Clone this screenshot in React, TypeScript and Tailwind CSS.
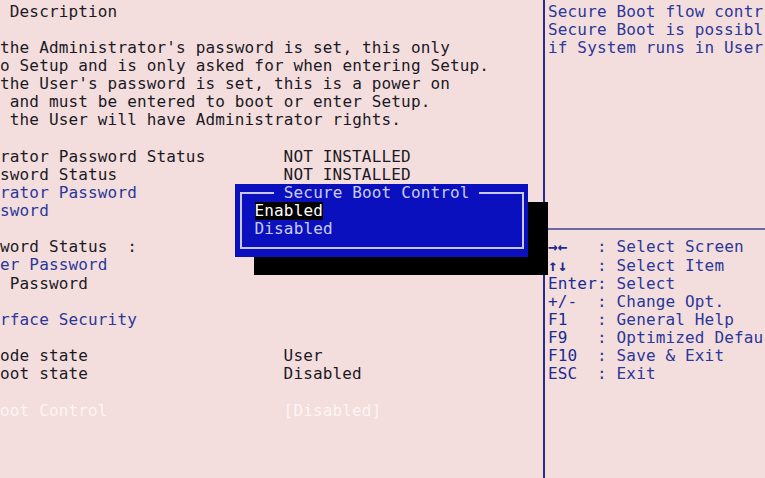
const ROW = "h-[18.15px] leading-[18.15px] whitespace-pre";

const dark = "text-[#1b1926]";
const blue = "text-[#2b3799]";

type Line = { a?: string; b?: string; tone?: "dark" | "blue" | "faint" };

const LEFT: Line[] = [
    { a: " Description" },
    {},
    { a: "the Administrator's password is set, this only" },
    { a: "o Setup and is only asked for when entering Setup." },
    { a: "the User's password is set, this is a power on" },
    { a: " and must be entered to boot or enter Setup." },
    { a: " the User will have Administrator rights." },
    {},
    { a: "rator Password Status", b: "NOT INSTALLED" },
    { a: "sword Status", b: "NOT INSTALLED" },
    { a: "rator Password", tone: "blue" },
    { a: "sword", tone: "blue" },
    {},
    { a: "word Status  :" },
    { a: "er Password", tone: "blue" },
    { a: " Password" },
    {},
    { a: "rface Security", tone: "blue" },
    {},
    { a: "ode state", b: "User" },
    { a: "oot state", b: "Disabled" },
    {},
    { a: "oot Control", b: "[Disabled]", tone: "faint" },
];

const HELP = [
    "Secure Boot flow contr",
    "Secure Boot is possibl",
    "if System runs in User",
];

// [key, description, arrow glyph?]
const KEYS: [string, string, boolean][] = [
    ["→←", "Select Screen", true],
    ["↑↓", "Select Item", true],
    ["Enter", "Select", false],
    ["+/-", "Change Opt.", false],
    ["F1", "General Help", false],
    ["F9", "Optimized Defau", false],
    ["F10", "Save & Exit", false],
    ["ESC", "Exit", false],
];

function toneClass(t?: Line["tone"]) {
    if (t === "blue") return blue;
    if (t === "faint") return "text-[#fdf4f3]";
    return dark;
}

export default function App() {
    return (
        <div
            className="relative w-[765px] h-[478px] overflow-hidden bg-[#f3dedd] text-[16px] tracking-[0.15px]"
            style={{ fontFamily: '"DejaVu Sans Mono", "Liberation Mono", monospace' }}
        >
            <div className="flex h-full">
                {/* left: settings */}
                <div className="w-[543px] shrink-0 pt-[2.5px]">
                    {LEFT.map((l, i) => (
                        <div key={i} className={`${ROW} flex ${toneClass(l.tone)}`}>
                            {l.b ? (
                                <>
                                    <span className="w-[283.6px] shrink-0">{l.a}</span>
                                    <span>{l.b}</span>
                                </>
                            ) : (
                                <span>{l.a ?? ""}</span>
                            )}
                        </div>
                    ))}
                </div>

                <div className="w-[2px] shrink-0 bg-[#2a2a8e]" />

                {/* right: help */}
                <div className="flex-1 pt-[2.5px] overflow-hidden">
                    <div className="h-[217.8px] pl-[3px]">
                        {HELP.map(h => (
                            <div key={h} className={`${ROW} ${blue}`}>{h}</div>
                        ))}
                    </div>
                    <div className="h-[18.15px] flex items-center">
                        <div className="w-full h-[2px] bg-[#6b6aa3]" />
                    </div>
                    {KEYS.map(([k, d, arrow]) => (
                        <div key={d} className={`${ROW} pl-[3px] flex`}>
                            <span className={`w-[49px] shrink-0 text-[#1c2b92] ${arrow ? "font-bold" : ""}`}>{k}</span>
                            <span className={blue}>: {d}</span>
                        </div>
                    ))}
                </div>
            </div>

            {/* popup shadow */}
            <div className="absolute left-[254px] top-[202px] w-[294px] h-[72.6px] bg-black" />

            {/* popup */}
            <div className="absolute left-[235px] top-[184px] w-[293px] h-[72.6px] bg-[#0a10bd]">
                <div className="absolute left-[5px] top-[8px] right-[4px] bottom-[8px] border-2 border-[#c9c9ef]" />
                <div className="relative flex flex-col items-start pl-[19.5px] text-[#c9ccf2]">
                    <span className={`${ROW} ml-[19.5px] bg-[#0a10bd]`}>{" Secure Boot Control "}</span>
                    <span className={`${ROW} bg-black text-white`}>Enabled</span>
                    <span className={ROW}>Disabled</span>
                </div>
            </div>
        </div>
    );
}
